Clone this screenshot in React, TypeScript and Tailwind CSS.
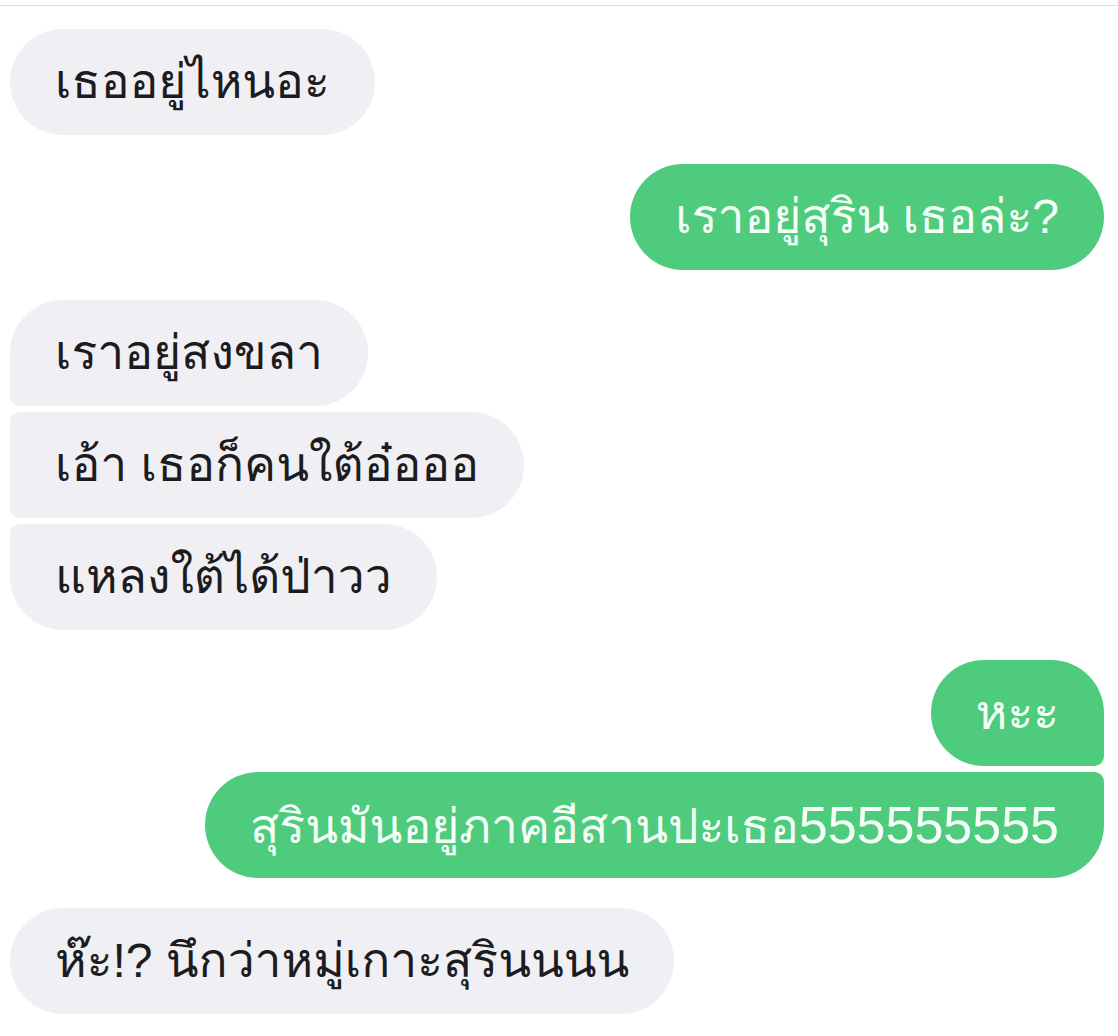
type Msg = {
  text: string;
  tail?: string;
  mine: boolean;
  shape: string;
  gap: string;
};

const MESSAGES: Msg[] = [
  { text: "เธออยู่ไหนอะ", mine: false, shape: "rounded-[54px]", gap: "mt-[23px]" },
  { text: "เราอยู่สุริน เธอล่ะ?", mine: true, shape: "rounded-[54px]", gap: "mt-[29px]" },
  { text: "เราอยู่สงขลา", mine: false, shape: "rounded-[54px] rounded-bl-[10px]", gap: "mt-[30px]" },
  { text: "เอ้า เธอก็คนใต้อ๋อออ", mine: false, shape: "rounded-[54px] rounded-tl-[10px] rounded-bl-[10px]", gap: "mt-[6px]" },
  { text: "แหลงใต้ได้ป่าวว", mine: false, shape: "rounded-[54px] rounded-tl-[10px]", gap: "mt-[6px]" },
  { text: "หะะ", mine: true, shape: "rounded-[54px] rounded-br-[10px]", gap: "mt-[30px]" },
  {
    text: "สุรินมันอยู่ภาคอีสานปะเธอ",
    tail: "555555555",
    mine: true,
    shape: "rounded-[54px] rounded-tr-[10px]",
    gap: "mt-[6px]",
  },
  { text: "ห๊ะ!? นึกว่าหมู่เกาะสุรินนนน", mine: false, shape: "rounded-[54px]", gap: "mt-[30px]" },
];

export default function App() {
  return (
    <div className="w-[1118px] h-[1036px] overflow-hidden bg-white font-['Liberation_Sans',Loma,sans-serif]">
      <div className="mt-[5px] h-px bg-[#dcdcdc]" />
      <div className="flex flex-col pl-[10px] pr-[14px]">
        {MESSAGES.map((m, i) => (
          <div key={i} className={`flex ${m.mine ? "justify-end" : "justify-start"} ${m.gap}`}>
            <div
              className={`h-[106px] flex items-center px-[45px] text-[48px] whitespace-nowrap ${m.shape} ${
                m.mine ? "bg-[#4fcb7d] text-[#f4fff7]" : "bg-[#efeff4] text-[#1c1c1e]"
              }`}
            >
              <span>
                {m.text}
                {m.tail && <span className="text-[52px]">{m.tail}</span>}
              </span>
            </div>
          </div>
        ))}
      </div>
    </div>
  );
}
